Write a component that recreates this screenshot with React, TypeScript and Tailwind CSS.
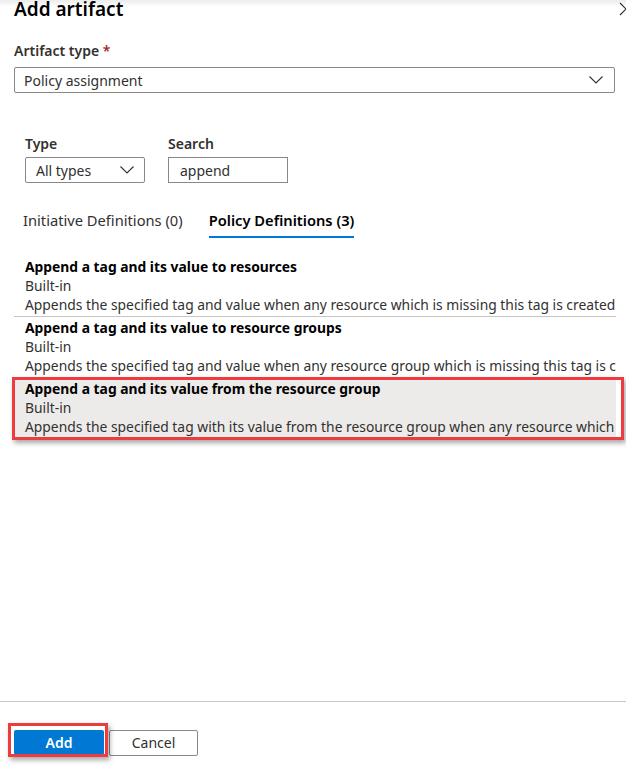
import React from "react";

const Chevron = ({ className = "" }: { className?: string }) => (
  <svg className={className} width="14" height="8" viewBox="0 0 14 8" fill="none">
    <polyline points="0.5,0.5 7,7 13.5,0.5" stroke="#323130" strokeWidth="1.1" />
  </svg>
);

const rows = [
  {
    title: "Append a tag and its value to resources",
    desc: "Appends the specified tag and value when any resource which is missing this tag is created or updated. Does not modify the tags of resources created before this policy was applied.",
  },
  {
    title: "Append a tag and its value to resource groups",
    desc: "Appends the specified tag and value when any resource group which is missing this tag is created or updated. Does not modify the tags of resource groups created before this policy was applied.",
  },
  {
    title: "Append a tag and its value from the resource group",
    desc: "Appends the specified tag with its value from the resource group when any resource which is missing this tag is created or updated.",
  },
];

export default function App() {
  return (
    <div
      className="relative w-[626px] h-[767px] overflow-hidden bg-white text-[#323130] text-[14px]"
      style={{ fontFamily: '"Noto Sans", "Open Sans", sans-serif' }}
    >
      <div className="absolute left-0 top-0 w-full h-[7px] bg-[linear-gradient(#ececec,#ffffff)]" />
      <div className="absolute right-[-7px] top-[2px]">
        <svg width="14" height="14" viewBox="0 0 14 14">
          <path d="M1 1 L13 13 M13 1 L1 13" stroke="#323130" strokeWidth="1.2" />
        </svg>
      </div>

      <div className="relative px-[14px]">
        <div className="mt-[-3px] text-[19px] leading-[25px] font-semibold text-black">Add artifact</div>

        <div className="mt-[19px] leading-[20px] font-semibold">
          Artifact type <span className="text-[#a4262c]">*</span>
        </div>
        <div className="mt-[6px] h-[26px] w-[601px] border border-[#8a8886] rounded-[2px] flex items-center justify-between pl-[9px] pr-[11px]">
          <span>Policy assignment</span>
          <Chevron />
        </div>

        <div className="mt-[41px] ml-[11px] flex gap-[23px]">
          <div className="flex flex-col">
            <div className="leading-[20px] font-semibold">Type</div>
            <div className="mt-[3px] h-[26px] w-[120px] border border-[#8a8886] rounded-[2px] flex items-center justify-between pl-[10px] pr-[10px]">
              <span>All types</span>
              <Chevron />
            </div>
          </div>
          <div className="flex flex-col">
            <div className="leading-[20px] font-semibold">Search</div>
            <div className="mt-[3px] h-[26px] w-[120px] border border-[#8a8886] flex items-center pl-[11px]">
              <span>append</span>
            </div>
          </div>
        </div>

        <div className="mt-[27px] ml-[9px] flex gap-[26px] leading-[20px] text-[14.7px]">
          <div className="pb-[8px]">Initiative Definitions (0)</div>
          <div className="pb-[6px] border-b-2 border-[#0078d4] font-semibold text-black">Policy Definitions (3)</div>
        </div>

        <div className="mt-[18px] w-[602px] overflow-hidden text-[13.85px]">
          {rows.map((r, i) => (
            <div
              key={i}
              className={
                "pl-[11px] pt-[1px] pb-[2px] leading-[19px] whitespace-nowrap border-b " +
                (i === 2 ? "bg-[#edebe9] border-transparent" : "border-[#c8c6c4]")
              }
            >
              <div className="font-bold text-black">{r.title}</div>
              <div>Built-in</div>
              <div>{r.desc}</div>
            </div>
          ))}
        </div>
      </div>

      <div className="absolute left-[12px] top-[377px] w-[612px] h-[63px] border-[3px] border-[#ee3b40] shadow-[2px_3px_5px_rgba(0,0,0,0.35)]" />

      <div className="absolute left-0 top-[701px] w-full border-t border-[#c8c6c4]" />

      <div className="absolute left-[14px] top-[730px] flex gap-[5px]">
        <button className="w-[90px] h-[25px] bg-[#0078d4] text-white font-semibold rounded-[2px] leading-[25px]">Add</button>
        <button className="w-[89px] h-[26px] bg-white border border-[#8a8886] rounded-[2px] leading-[24px]">Cancel</button>
      </div>
      <div className="absolute left-[8px] top-[723px] w-[100px] h-[34px] border-[3px] border-[#ee3b40] shadow-[2px_3px_5px_rgba(0,0,0,0.35)]" />
    </div>
  );
}
